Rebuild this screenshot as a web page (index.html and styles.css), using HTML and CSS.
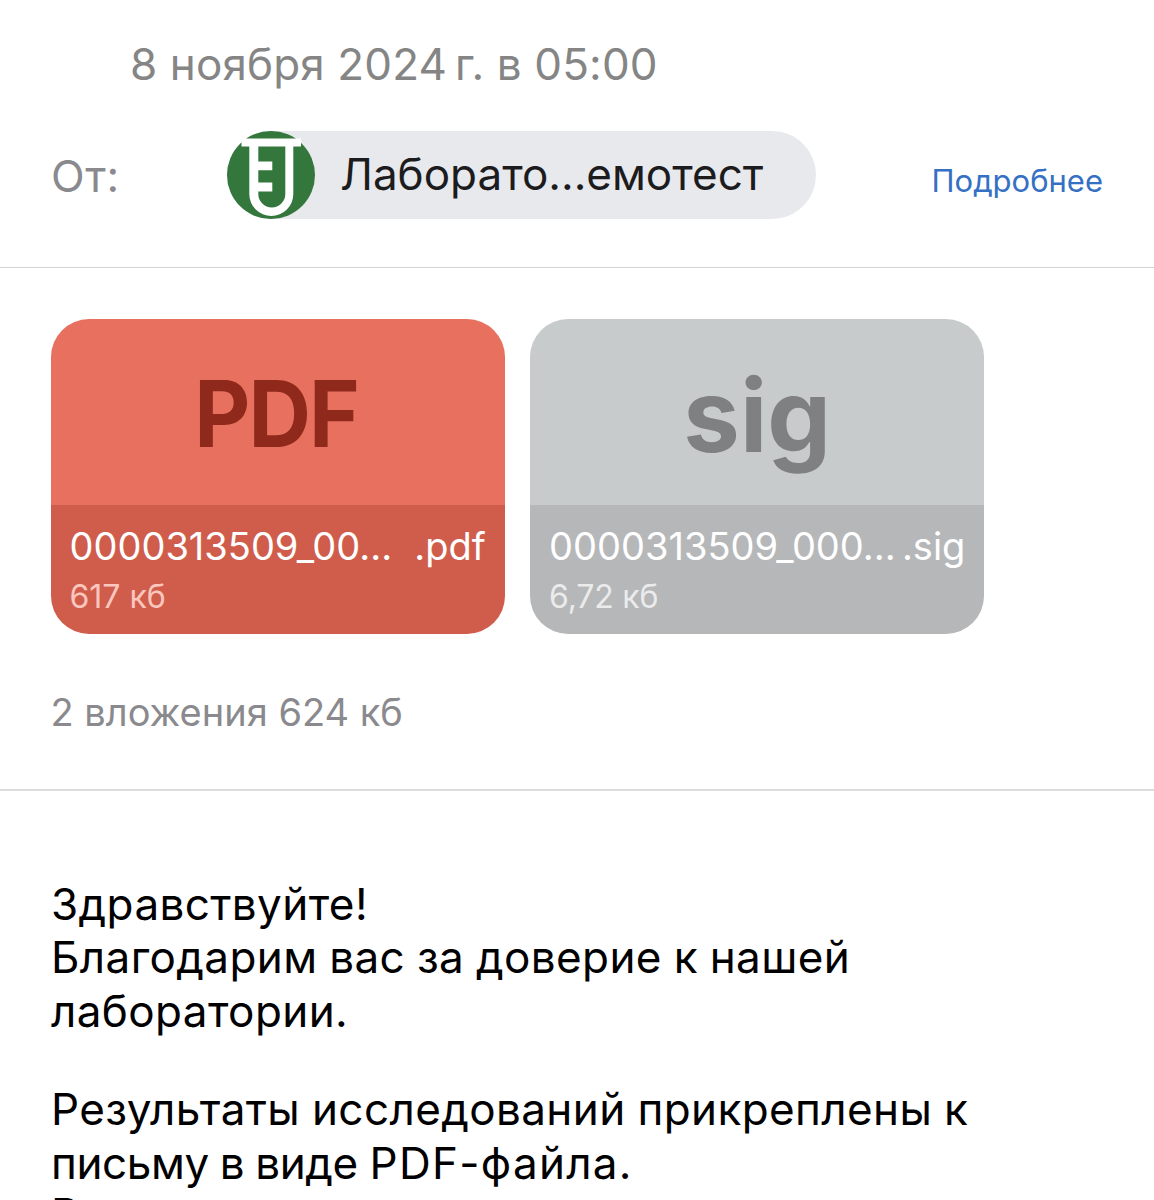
FILE: index.html
```
<!DOCTYPE html>
<html lang="ru">
<head>
  <meta charset="UTF-8">
  <meta name="viewport" content="width=device-width, initial-scale=1.0">
  <title>Письмо</title>
  <link rel="stylesheet" href="styles.css">
</head>
<body>

  <header class="mail-header">
    <div class="date">8 ноября 2024&#8239;г. в 05:00</div>
    <div class="from">
      <span class="from-label">От:</span>
      <div class="sender">
        <svg class="avatar" viewBox="0 0 88 88">
          <circle cx="44" cy="44" r="44" fill="#34773c"/>
          <path d="M14.500 7.500H74V15.500H66.300V63A22 22 0 0 1 22.300 63V15.500H14.500Z" fill="#fff"/>
          <path d="M31.300 15.500H58.300V63A13.500 13.500 0 0 1 31.300 63V60.500H45.300V51.500H31.300V39.200H45.300V30.500H31.300Z" fill="#34773c"/>
        </svg>
        <span class="sender-name">Лаборато...емотест</span>
      </div>
      <a href="#" class="more">Подробнее</a>
    </div>
  </header>

  <section class="attachments">
    <div class="cards">
      <div class="card card-pdf">
        <div class="card-type"><span>PDF</span></div>
        <div class="card-info">
          <div class="file-name"><span>0000313509_00...</span><span>.pdf</span></div>
          <div class="file-size">617 кб</div>
        </div>
      </div>
      <div class="card card-sig">
        <div class="card-type">sig</div>
        <div class="card-info">
          <div class="file-name"><span>0000313509_000...</span><span>.sig</span></div>
          <div class="file-size">6,72 кб</div>
        </div>
      </div>
    </div>
    <div class="summary">2 вложения 624 кб</div>
  </section>

  <main class="message">
    <p>Здравствуйте!<br>
      Благодарим вас за доверие к нашей<br>
      лаборатории.</p>
    <p>Результаты исследований прикреплены к<br>
      <span class="tight">письму в виде</span> <span class="wide">PDF-файла.</span><br>
      <span class="last-line">В</span></p>
  </main>

</body>
</html>
```
FILE: styles.css
```
* {
  box-sizing: border-box;
}

body {
  margin: 0;
  height: 1200px;
  overflow: hidden;
  font-family: Inter, "Noto Sans", sans-serif;
  background-color: #fff;
}

.mail-header {
  height: 268px;
  padding-top: 35px;
  border-bottom: 1px solid #d4d4d4;
}

.date {
  padding-left: 130px;
  font-size: 44px;
  line-height: 58px;
  letter-spacing: 0.13px;
  color: #858585;
}

.from {
  display: flex;
  align-items: center;
  height: 88px;
  margin-top: 38px;
  padding: 0 51px;
}

.from-label {
  width: 176px;
  padding-top: 2px;
  font-size: 44px;
  letter-spacing: 0.7px;
  color: #8a8a8e;
}

.sender {
  display: flex;
  align-items: center;
  width: 589px;
  height: 88px;
  border-radius: 44px;
  background-color: #e8e9ed;
}

.avatar {
  width: 88px;
  height: 88px;
  margin-right: 25px;
}

.sender-name {
  padding-bottom: 2px;
  font-size: 44px;
  color: #1c1c1e;
  white-space: nowrap;
}

.more {
  margin-left: auto;
  padding-top: 11px;
  font-size: 31px;
  color: #3570c4;
  text-decoration: none;
}

.attachments {
  height: 523px;
  padding: 51px 50.5px 0;
  border-bottom: 2px solid #dcdcdc;
}

.cards {
  display: flex;
  gap: 25.3px;
}

.card {
  width: 454.3px;
  height: 315px;
  border-radius: 38px;
  overflow: hidden;
}

.card-type {
  height: 186px;
  text-align: center;
  font-weight: 700;
}

.card-info {
  height: 129px;
  padding: 17px 19px 0;
  color: #fff;
}

.file-name {
  display: flex;
  justify-content: space-between;
  font-size: 38px;
  line-height: 48px;
}

.file-size {
  margin-top: 9px;
  font-size: 32px;
  line-height: 36px;
}

.card-pdf .card-type {
  padding-right: 4px;
  background-color: #e8705f;
  color: #8e291b;
  font-size: 92px;
  line-height: 190px;
  letter-spacing: -2px;
}

.card-pdf .card-type span {
  display: inline-block;
  transform: scaleX(0.94);
}

.card-pdf .card-info {
  background-color: #d05d4c;
}

.card-pdf .file-size {
  color: #fbc6bd;
}

.card-sig .card-type {
  background-color: #c8cbcc;
  color: #7f8081;
  font-size: 101px;
  line-height: 192px;
}

.card-sig .card-info {
  background-color: #b6b7b9;
}

.card-sig .file-size {
  letter-spacing: -0.2px;
  color: #ebebec;
}

.summary {
  margin-top: 53px;
  font-size: 38px;
  line-height: 50px;
  color: #8a8a8e;
}

.message {
  padding: 87px 51px 0;
  font-size: 44px;
  line-height: 53.4px;
  letter-spacing: 0.4px;
  word-spacing: -1px;
  white-space: nowrap;
  color: #000;
}

.message p {
  margin: 0 0 45px;
}

.tight {
  letter-spacing: -0.4px;
}

.wide {
  letter-spacing: 1.3px;
}

.last-line {
  display: inline-block;
  transform: translateY(-2px);
}
```
